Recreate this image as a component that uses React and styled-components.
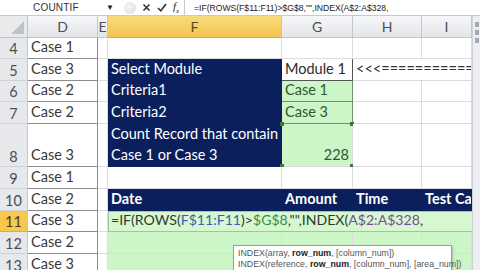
import React from 'react'
import styled, { createGlobalStyle } from 'styled-components'

const navy = '#0b1f5c';
const mint = '#ccf5c8';
const grid = '#dadcdf';
const caseLine = '#8c8c8c';

const GlobalStyle = createGlobalStyle`
    html, body{
        margin: 0;
        padding: 0;
        background: #ffffff;
        overflow: hidden;
    }
    body{
        font-family: Lato, "Noto Sans", sans-serif;
    }
`;

const Page = styled.div`
    width: 480px;
    height: 270px;
    display: flex;
    flex-direction: column;
    overflow: hidden;
    position: relative;
`;

const FormulaBar = styled.div`
    height: 16px;
    display: flex;
    align-items: center;
    border-bottom: 1px solid #c6c9ce;
    font-family: "Liberation Sans", Arial, sans-serif;
    font-size: 10px;
    color: #222;
    background: #fff;
`;

const NameBox = styled.div`
    width: 112px;
    padding-left: 33px;
    box-sizing: border-box;
    letter-spacing: 0.2px;
    color: #333;
`;

const Tools = styled.div`
    display: flex;
    align-items: center;
    gap: 6px;
    width: 72px;
    height: 100%;
    border-right: 1px solid #c6c9ce;
    margin-right: 9px;
`;

const Pill = styled.span`
    width: 12px;
    height: 12px;
    border-radius: 50%;
    background: radial-gradient(circle at 40% 40%, #f4f5f7, #d8dbe0);
    margin-left: 4px;
`;

const Formula = styled.div`
    white-space: nowrap;
    font-size: 8.6px;
    transform-origin: left center;
`;

const Body = styled.div`
    display: flex;
    flex: 1;
`;

const Sheet = styled.div`
    width: 472px;
    display: grid;
    grid-template-columns: 28px 70px 10px 174px 71px 69px 50px;
    grid-template-rows: 22px 21px 22px 21px 22px 43px 22px 22px 21px 22px 22px;
    position: relative;
`;

const Corner = styled.div`
    background: #e9eaec;
    border-right: 1px solid #c2c5ca;
    border-bottom: 1px solid #c2c5ca;
    position: relative;
    &::after{
        content: '';
        position: absolute;
        right: 3px;
        bottom: 3px;
        border-left: 13px solid transparent;
        border-bottom: 13px solid #bfc3c9;
    }
`;

const ColHead = styled.div`
    display: flex;
    align-items: center;
    justify-content: center;
    font-size: 14px;
    color: ${p => p.$active ? '#5a4a1a' : '#4a4f57'};
    background: ${p => p.$active
        ? 'linear-gradient(#f9dc7e, #f3c44e)'
        : 'linear-gradient(#f6f7f8, #e3e5e8)'};
    border-right: 1px solid #c2c5ca;
    border-bottom: 1px solid ${p => p.$active ? '#e2a93a' : '#c2c5ca'};
    box-sizing: border-box;
`;

const RowHead = styled.div`
    display: flex;
    align-items: flex-end;
    justify-content: center;
    padding-bottom: 1px;
    font-size: 14.5px;
    color: ${p => p.$active ? '#4d3b0c' : '#4a4f57'};
    background: ${p => p.$active ? '#f6c94e' : '#e6e8eb'};
    border-right: 1px solid #c2c5ca;
    border-bottom: 1px solid ${p => p.$active ? '#e2a93a' : '#cfd2d6'};
    box-sizing: border-box;
`;

const Cell = styled.div`
    grid-column: ${p => p.$span ? `span ${p.$span}` : 'auto'};
    display: flex;
    flex-direction: column;
    justify-content: flex-end;
    align-items: ${p => p.$right ? 'flex-end' : 'flex-start'};
    padding: 0 3px 1px 3px;
    box-sizing: border-box;
    font-size: 14.5px;
    line-height: 20px;
    white-space: nowrap;
    overflow: visible;
    font-weight: ${p => p.$bold ? 700 : 400};
    color: ${p => p.$tone || '#2b2b2b'};
    background: ${p => p.$bg || '#fff'};
    border-right: 1px solid ${p => p.$line || grid};
    border-bottom: 1px solid ${p => p.$line || grid};
    position: relative;
`;

const CaseCell = styled(Cell)`
    color: #3a3a3a;
    border-right: 1px solid ${caseLine};
    border-bottom: 1px solid ${caseLine};
`;

const Editor = styled(Cell)`
    background: #d6f7cf;
    border: 1px solid #9fc79a;
    border-right: none;
    padding-left: 2px;
    font-size: 14.1px;
    z-index: 2;
`;

const Ref = styled.span`
    color: ${p => p.$c};
`;

const Handle = styled.span`
    position: absolute;
    width: 4px;
    height: 4px;
    background: #3b7a3b;
    ${p => p.$top ? 'top: -2px;' : 'bottom: -2px;'}
    ${p => p.$left ? 'left: -2px;' : 'right: -2px;'}
`;

const Scroll = styled.div`
    flex: 1;
    background: #eceef1;
    border-left: 1px solid #cfd2d6;
    display: flex;
    flex-direction: column;
    align-items: center;
    gap: 3px;
    padding-top: 6px;
    span{
        width: 4px;
        height: 5px;
        background: #a5aab2;
    }
`;

const Tip = styled.div`
    position: absolute;
    left: 233px;
    top: 245px;
    width: 219px;
    padding: 2px 4px;
    box-sizing: border-box;
    background: #fff;
    border: 1px solid #9a9ea5;
    box-shadow: 1px 1px 2px rgba(0,0,0,0.2);
    font-family: "Liberation Sans", Arial, sans-serif;
    font-size: 8.8px;
    line-height: 11px;
    color: #555;
    white-space: nowrap;
    z-index: 5;
    b{
        color: #222;
    }
`;

const cases = ['Case 1', 'Case 3', 'Case 2', 'Case 2', 'Case 3', 'Case 1', 'Case 2', 'Case 3', 'Case 2', 'Case 3'];

const Empty = ({ bg }) => <Cell $bg={bg} />;

const App = () => {
    const rows = [4, 5, 6, 7, 8, 9, 10, 11, 12, 13];
    return(
        <Page>
            <GlobalStyle />
            <FormulaBar>
                <NameBox>COUNTIF</NameBox>
                <Tools>
                    <span style={{ fontSize: '8px', marginLeft: '-6px' }}>▼</span>
                    <Pill />
                    <svg width="9" height="9" viewBox="0 0 9 9">
                        <path d="M1.5 1.5 L7.5 7.5 M7.5 1.5 L1.5 7.5" stroke="#333" strokeWidth="1.6" />
                    </svg>
                    <svg width="10" height="9" viewBox="0 0 10 9">
                        <path d="M1 5 L3.8 7.8 L9 1" stroke="#333" strokeWidth="1.6" fill="none" />
                    </svg>
                    <span style={{ fontStyle: 'italic', fontFamily: '"Liberation Serif", serif', fontSize: '11px' }}>f<sub style={{ fontSize: '7px' }}>x</sub></span>
                </Tools>
                <Formula>=IF(ROWS(F$11:F11)&gt;$G$8,"",INDEX(A$2:A$328,</Formula>
            </FormulaBar>
            <Body>
                <Sheet>
                    <Corner />
                    <ColHead>D</ColHead>
                    <ColHead>E</ColHead>
                    <ColHead $active>F</ColHead>
                    <ColHead>G</ColHead>
                    <ColHead>H</ColHead>
                    <ColHead>I</ColHead>

                    {rows.map((r, i) => (
                        <React.Fragment key={r}>
                            <RowHead $active={r === 11}>{r}</RowHead>
                            <CaseCell>{cases[i]}</CaseCell>
                            <Cell />
                            {r === 4 || r === 9 ? (
                                <><Empty /><Empty /><Empty /><Empty /></>
                            ) : null}
                            {r === 5 && (
                                <>
                                    <Cell $bg={navy} $tone="#fff" $line={navy}>Select Module</Cell>
                                    <Cell $line="#555">Module 1</Cell>
                                    <Cell $span={2} $tone="#333" style={{ overflow: 'hidden' }}>&lt;&lt;&lt;=============</Cell>
                                </>
                            )}
                            {(r === 6 || r === 7) && (
                                <>
                                    <Cell $bg={navy} $tone="#fff" $line={navy}>{r === 6 ? 'Criteria1' : 'Criteria2'}</Cell>
                                    <Cell $bg={mint} $tone="#2d5a2d" $line="#6f8f6f">{r === 6 ? 'Case 1' : 'Case 3'}</Cell>
                                    <Empty /><Empty />
                                </>
                            )}
                            {r === 8 && (
                                <>
                                    <Cell $bg={navy} $tone="#fff" $line={navy} style={{ lineHeight: '21px' }}>
                                        <span>Count Record that contain</span>
                                        <span>Case 1 or Case 3</span>
                                    </Cell>
                                    <Cell $bg={mint} $tone="#2d5a2d" $right>
                                        228
                                        <Handle $top $left /><Handle $top /><Handle $left /><Handle />
                                    </Cell>
                                    <Empty /><Empty />
                                </>
                            )}
                            {r === 10 && (
                                <>
                                    <Cell $bg={navy} $tone="#fff" $line={navy} $bold>Date</Cell>
                                    <Cell $bg={navy} $tone="#fff" $line={navy} $bold>Amount</Cell>
                                    <Cell $bg={navy} $tone="#fff" $line={navy} $bold>Time</Cell>
                                    <Cell $bg={navy} $tone="#fff" $line={navy} $bold style={{ overflow: 'hidden' }}>Test Case</Cell>
                                </>
                            )}
                            {r === 11 && (
                                <Editor $span={4} $tone="#2f3b2f">
                                    <span>
                                        =IF(ROWS(<Ref $c="#3c5fae">F$11:F11</Ref>)&gt;<Ref $c="#3d8b3d">$G$8</Ref>,"",INDEX(<Ref $c="#7b4e9c">A$2:A$328</Ref>,
                                    </span>
                                </Editor>
                            )}
                            {(r === 12 || r === 13) && (
                                <><Empty bg={mint} /><Empty bg={mint} /><Empty bg={mint} /><Empty bg={mint} /></>
                            )}
                        </React.Fragment>
                    ))}
                </Sheet>
                <Scroll>
                    <span /><span /><span />
                </Scroll>
            </Body>
            <Tip>
                <div>INDEX(array, <b>row_num</b>, [column_num])</div>
                <div>INDEX(reference, <b>row_num</b>, [column_num], [area_num])</div>
            </Tip>
        </Page>
    );
}

export default App;
